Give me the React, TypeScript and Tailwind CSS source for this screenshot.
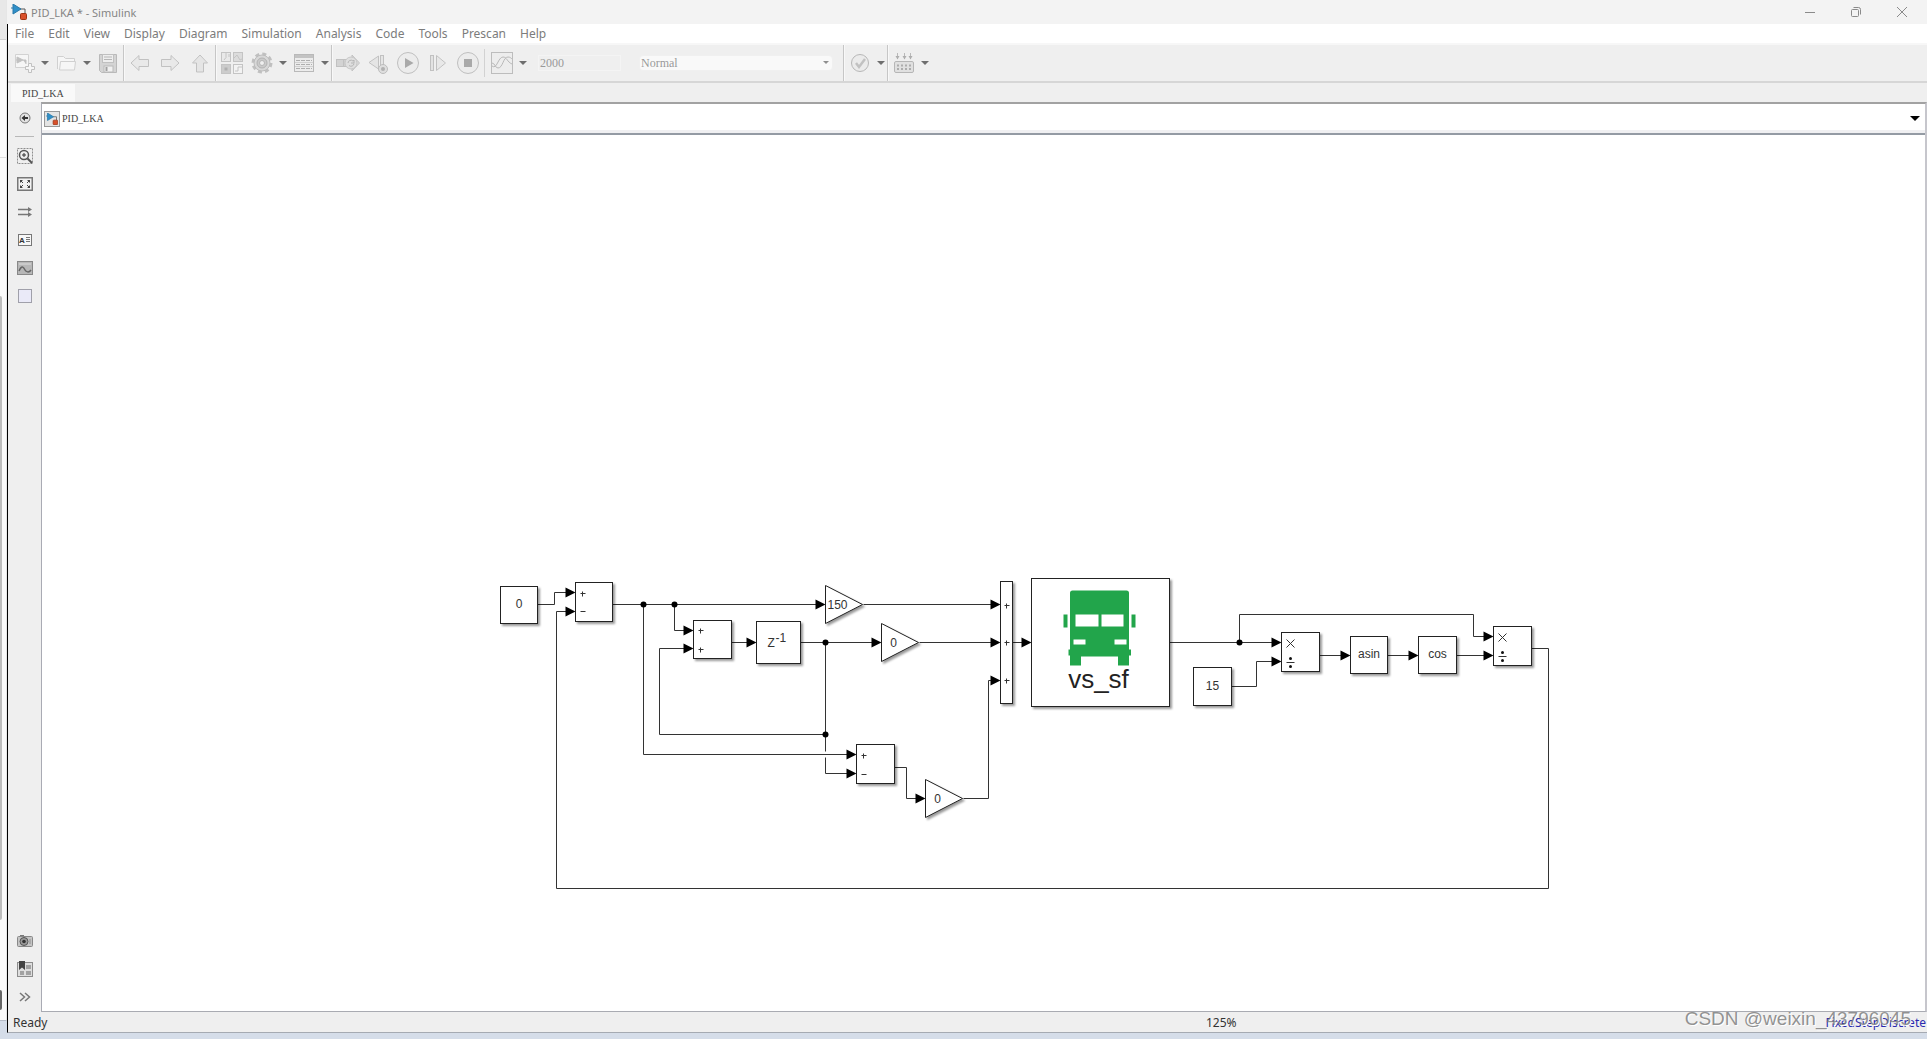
import React from "react";

type IconProps = { children: React.ReactNode; w?: number; h?: number };

function Icon({ children, w = 24, h = 24 }: IconProps) {
  return (
    <svg width={w} height={h} viewBox={`0 0 ${w} ${h}`} fill="none" className="shrink-0" aria-hidden="true">
      {children}
    </svg>
  );
}

function Tool({ label, children }: { label: string; children: React.ReactNode }) {
  return (
    <button type="button" aria-label={label} className="flex w-[30px] items-center justify-center opacity-90">
      {children}
    </button>
  );
}

function Caret({ label }: { label: string }) {
  return (
    <button type="button" aria-label={label} className="flex w-3 items-center justify-center">
      <svg width="8" height="4" viewBox="0 0 8 4" aria-hidden="true">
        <path d="M0 0h8L4 4z" fill="#6e6e6e" />
      </svg>
    </button>
  );
}

function Separator() {
  return <div className="w-0.5 self-stretch border-l border-r border-l-[#c6c6c6] border-r-[#f8f8f8]" />;
}

function ModelMark() {
  return (
    <>
      <path d="M9 5h5v5" stroke="#555" strokeWidth="1" />
      <path d="M0 4h2M2 0l8 5-8 5z" fill="#2f8fc8" stroke="#2b79a8" strokeWidth="1" />
      <rect x="9.5" y="9.5" width="6" height="6" rx="1" fill="#d9502a" stroke="#9c3414" />
    </>
  );
}

function TitleBar() {
  return (
    <header className="flex h-6 shrink-0 items-center bg-[#f3f3f3] pl-1 pr-0.5">
      <Icon w={16} h={16}>
        <ModelMark />
      </Icon>
      <h1 className="ml-1 grow pt-0.5 text-[11px] leading-4 text-[#858585]">PID_LKA * - Simulink</h1>
      <button type="button" aria-label="Minimize" className="flex h-6 w-[46px] items-center justify-center">
        <Icon w={12} h={12}>
          <path d="M1 6.5h10" stroke="#8a8a8a" />
        </Icon>
      </button>
      <button type="button" aria-label="Restore" className="flex h-6 w-[46px] items-center justify-center">
        <Icon w={12} h={12}>
          <rect x="1.5" y="3.5" width="7" height="7" rx="1" stroke="#8a8a8a" />
          <path d="M3.5 1.5h5a2 2 0 0 1 2 2v5" stroke="#8a8a8a" />
        </Icon>
      </button>
      <button type="button" aria-label="Close" className="flex h-6 w-[46px] items-center justify-center">
        <Icon w={12} h={12}>
          <path d="M1 1l10 10M11 1L1 11" stroke="#8a8a8a" />
        </Icon>
      </button>
    </header>
  );
}

const menus = [
  "File", "Edit", "View", "Display", "Diagram", "Simulation",
  "Analysis", "Code", "Tools", "Prescan", "Help",
];

function MenuBar() {
  return (
    <nav className="flex h-[21px] shrink-0 items-center gap-[14px] border-b-2 border-[#f7f7f7] bg-white pl-[7px] pt-px text-[12px] leading-4 text-[#7c7c7c]">
      {menus.map((m) => (
        <button key={m} type="button">{m}</button>
      ))}
    </nav>
  );
}

const g = "#bdbdbd";
const lt = "#f7f7f7";

function Toolbar() {
  return (
    <div className="flex h-[38px] shrink-0 items-stretch border-b-2 border-[#d6d6d6] bg-[#efefef] pl-px">
      <Tool label="New model">
        <Icon>
          <path d="M3.500 3.500h13v13h-13z" fill={lt} stroke="#cfcfcf" />
          <path d="M5 6l6 3-6 3zM4 9h2M11 9h3v4" fill={g} stroke={g} />
          <path d="M16.500 12.500h3v3h3v3h-3v3h-3v-3h-3v-3h3z" fill={lt} stroke={g} />
        </Icon>
      </Tool>
      <Caret label="New options" />
      <Tool label="Open">
        <Icon>
          <path d="M3.500 18V5.500h6l2 2h9V11" fill={lt} stroke="#cdcdcd" />
          <path d="M6.500 10.500h15l-1 8.500H5.500z" fill={lt} stroke="#cdcdcd" />
        </Icon>
      </Tool>
      <Caret label="Open recent" />
      <Tool label="Save">
        <Icon>
          <path d="M3.500 3.500h17v18h-15l-2-2z" fill="#d2d2d2" stroke="#b4b4b4" />
          <rect x="6.500" y="3.500" width="11" height="8" fill="#eee" stroke="#bbb" />
          <path d="M8 6h8M8 8.500h8" stroke="#b0b0b0" />
          <rect x="8" y="15" width="9" height="6" fill="#f2f2f2" stroke="#b4b4b4" />
          <rect x="9.500" y="16" width="2" height="4" fill="#999" />
        </Icon>
      </Tool>
      <Separator />
      <Tool label="Back">
        <Icon>
          <path d="M3 12l8-7.500v4h9.500v7H11v4z" fill="#e9e9e9" stroke={g} />
        </Icon>
      </Tool>
      <Tool label="Forward">
        <Icon>
          <path d="M21 12l-8-7.500v4H3.500v7H13v4z" fill="#e9e9e9" stroke={g} />
        </Icon>
      </Tool>
      <Tool label="Up to parent">
        <Icon>
          <path d="M12 4l7.500 8h-4v9h-7v-9h-4z" fill="#e5e5e5" stroke={g} />
        </Icon>
      </Tool>
      <Separator />
      <Tool label="Library browser">
        <Icon>
          <g stroke="#c0c0c0">
            <rect x="1.500" y="1.500" width="9" height="9" fill="#e9e9e9" />
            <rect x="13.500" y="1.500" width="9" height="9" fill="#dadada" />
            <rect x="1.500" y="13.500" width="9" height="9" fill="#c9c9c9" />
            <rect x="13.500" y="13.500" width="9" height="9" fill="#f4f4f4" />
            <path d="M6 1.500v5L4 9M9 3v3M14 7l3-3 3 5 2-1M15 20h3v-4h4" />
          </g>
          <rect x="4.500" y="16.500" width="3" height="3" fill="#aaa" />
        </Icon>
      </Tool>
      <Tool label="Model configuration">
        <Icon>
          <circle cx="12" cy="12" r="9" stroke="#bcbcbc" strokeWidth="3" strokeDasharray="4 3.070" />
          <circle cx="12" cy="12" r="8" fill="#d6d6d6" stroke="#b6b6b6" />
          <circle cx="12" cy="12" r="5" fill="#c6c6c6" stroke="#adadad" />
          <circle cx="12" cy="12" r="2.500" fill="#efefef" stroke="#b0b0b0" />
        </Icon>
      </Tool>
      <Caret label="Configuration options" />
      <Tool label="Model explorer">
        <Icon>
          <rect x="2.500" y="3.500" width="19" height="17" fill="#ececec" stroke="#b4b4b4" />
          <path d="M3 5.500h18" stroke="#bfbfbf" strokeWidth="3" />
          <path d="M4 9.500h16M4 13.500h16M4 17.500h16" stroke="#a8a8a8" strokeDasharray="4 1" />
          <path d="M3 11.500h18M3 15.500h18" stroke="#cecece" />
        </Icon>
      </Tool>
      <Caret label="Explorer options" />
      <Separator />
      <Tool label="Update diagram">
        <Icon>
          <rect x="0.500" y="8.500" width="7" height="7" fill="#d0d0d0" stroke={g} />
          <path d="M8 8.500h8V4l7.500 8-7.500 8v-4.500H8z" fill="#dcdcdc" stroke={g} />
          <circle cx="15" cy="12" r="6" fill="#dedede" stroke="#c2c2c2" />
          <path d="M12 12a3 3 0 0 1 5-2l1-1v3h-3M18 12.500a3 3 0 0 1-5 2" stroke="#b0b0b0" />
        </Icon>
      </Tool>
      <Tool label="Step back">
        <Icon>
          <path d="M12.500 5v13L3 11.500z" fill="#e5e5e5" stroke={g} />
          <rect x="14.500" y="4.500" width="3" height="13" fill="#e5e5e5" stroke={g} />
          <circle cx="17" cy="18" r="4.500" fill="#ddd" stroke="#b6b6b6" />
          <circle cx="17" cy="18" r="2" fill="#aaa" />
        </Icon>
      </Tool>
      <Tool label="Run">
        <Icon>
          <circle cx="12" cy="12" r="10.500" fill="#ececec" stroke="#bababa" />
          <path d="M9 7l8.500 5L9 17z" fill="#a2a2a2" />
        </Icon>
      </Tool>
      <Tool label="Step forward">
        <Icon>
          <rect x="4.500" y="4.500" width="3" height="15" fill="#e2e2e2" stroke={g} />
          <path d="M10.500 4.500v15l9-7.500z" fill="#e8e8e8" stroke={g} />
        </Icon>
      </Tool>
      <Tool label="Stop">
        <Icon>
          <circle cx="12" cy="12" r="10.500" fill="#ececec" stroke="#bababa" />
          <rect x="8" y="8" width="8" height="8" fill="#a2a2a2" />
        </Icon>
      </Tool>
      <div className="mx-px my-1 w-0.5 border-l border-[#d2d2d2]" />
      <Tool label="Simulation data inspector">
        <Icon>
          <rect x="1.500" y="1.500" width="21" height="21" fill="#ededed" stroke="#b8b8b8" />
          <path d="M2 15c5 4 6-9 11-9 4 0 4 5 9 7M2 12c3 0 3 5 6 5 5 0 5-11 10-11 2 0 3 1 4 2" stroke="#b4b4b4" />
        </Icon>
      </Tool>
      <Caret label="Data inspector options" />
      <input
        aria-label="Stop time"
        defaultValue="2000"
        className="ml-[9px] h-4 w-[83px] self-center border border-[#f4f4f4] bg-[#efefef] px-px font-['Liberation_Serif',serif] text-[12px] leading-[14px] text-[#999] outline-none"
      />
      <div className="relative ml-[18px] flex h-4 w-[194px] self-center">
        <select
          aria-label="Simulation mode"
          defaultValue="Normal"
          className="w-full appearance-none rounded-sm border border-[#f0f0f0] bg-[#f9f9f9] px-px font-['Liberation_Serif',serif] text-[12px] leading-[14px] text-[#999] outline-none"
        >
          <option>Normal</option>
        </select>
        <svg width="6" height="3" viewBox="0 0 6 3" className="pointer-events-none absolute right-1 top-1.5" aria-hidden="true">
          <path d="M0 0h6L3 3z" fill="#8f8f8f" />
        </svg>
      </div>
      <div className="ml-[10px] flex">
        <Separator />
        <Tool label="Model advisor">
          <Icon>
            <circle cx="12" cy="12" r="8.500" fill="#ebebeb" stroke="#b0b0b0" />
            <path d="M8 12l3 4 6-8" stroke="#bdbdbd" strokeWidth="2.500" />
          </Icon>
        </Tool>
        <Caret label="Advisor options" />
        <Separator />
        <Tool label="Build model">
          <Icon>
            <path d="M5.500 2v6M12.500 2v6M18.500 2v6" stroke="#b4b4b4" />
            <path d="M3.500 5h4l-2 3.500zM10.500 5h4l-2 3.500zM16.500 5h4l-2 3.500z" fill="#a8a8a8" />
            <rect x="2.500" y="10.500" width="19" height="11" rx="1.500" fill="#dfdfdf" stroke="#b0b0b0" />
            <path d="M5 14.500h14M5 18h14" stroke="#a5a5a5" strokeWidth="2" strokeDasharray="2 2" />
          </Icon>
        </Tool>
        <Caret label="Build options" />
      </div>
    </div>
  );
}

function SideTool({ label, children }: { label: string; children: React.ReactNode }) {
  return (
    <button type="button" aria-label={label} className="flex h-7 w-full shrink-0 items-center justify-center">
      <Icon w={16} h={16}>{children}</Icon>
    </button>
  );
}

function Sidebar() {
  return (
    <aside className="flex w-[33px] shrink-0 flex-col bg-[#efefef] pb-px pt-0.5">
      <SideTool label="Hide browser">
        <circle cx="8" cy="8" r="5" fill="#e3e3e3" stroke="#777" />
        <path d="M4.500 8l3.500-3v2h3v2H8v2z" fill="#333" />
      </SideTool>
      <div className="mx-[7px] mb-[5px] mt-1 border-t border-[#b8b8b8]" />
      <SideTool label="Zoom">
        <rect x="0.500" y="0.500" width="15" height="15" stroke="#8e8e8e" strokeDasharray="2 1" />
        <circle cx="7" cy="7" r="4.500" fill="#eee" stroke="#555" strokeWidth="1.500" />
        <path d="M7 5v4M5 7h4" stroke="#333" />
        <path d="M10.500 10.500l4.500 4.500" stroke="#555" strokeWidth="2" />
      </SideTool>
      <SideTool label="Fit to view">
        <rect x="0.750" y="1.750" width="14.500" height="12.500" fill="#f2f2f2" stroke="#777" strokeWidth="1.500" />
        <path d="M3 7V4h3zM13 7V4h-3zM3 9v3h3zM13 9v3h-3z" fill="#444" />
        <path d="M3 4l3 3M13 4l-3 3M3 12l3-3M13 12l-3-3" stroke="#444" />
      </SideTool>
      <SideTool label="Sample time">
        <path d="M1 5.500h11M1 10.500h11" stroke="#777" strokeWidth="1.500" />
        <path d="M11 3l4 2.500L11 8zM11 8l4 2.500-4 2.500z" fill="#777" />
      </SideTool>
      <SideTool label="Annotation">
        <rect x="1.500" y="2.500" width="13" height="11" fill="#f7f7f7" stroke="#777" />
        <text x="2" y="11" fontSize="8" fontWeight="bold" fill="#333" className="font-['Liberation_Sans',sans-serif]">A</text>
        <path d="M9 5.500h4M9 7.500h4M9 9.500h4" stroke="#777" />
      </SideTool>
      <SideTool label="Image">
        <rect x="0.500" y="1.500" width="15" height="13" fill="#b7b7b7" stroke="#888" />
        <path d="M2 4h12" stroke="#ddd" />
        <path d="M2 11c3-7 5-3 6-1s4 3 6 0" stroke="#666" strokeWidth="1.500" />
      </SideTool>
      <SideTool label="Area">
        <rect x="1.500" y="1.500" width="13" height="13" fill="#eaeaf8" stroke="#a0a0aa" />
      </SideTool>
      <div className="grow" />
      <SideTool label="Screenshot">
        <path d="M3 2h4v2H3z" fill="#777" />
        <rect x="0.500" y="3.500" width="15" height="10" rx="1" fill="#c4c4c4" stroke="#888" />
        <circle cx="7" cy="8.500" r="4" fill="#999" stroke="#555" />
        <circle cx="7" cy="8.500" r="1.800" fill="#333" />
        <path d="M12 6h2v5h-2z" fill="#aaa" />
      </SideTool>
      <SideTool label="Viewmarks">
        <rect x="0.500" y="1.500" width="15" height="14" fill="#dedede" stroke="#8c8c8c" />
        <path d="M9 4h5v4H9zM9 10h5v4H9zM3 10h4v4H3z" fill="#a2a2a2" />
        <path d="M2 0h6v9L5 6.500 2 9z" fill="#444" />
      </SideTool>
      <SideTool label="More">
        <path d="M3 4l4.500 4L3 12M8 4l4.500 4L8 12" stroke="#777" strokeWidth="1.500" />
      </SideTool>
    </aside>
  );
}

type Block = { x: number; y: number; w: number; h: number; text?: string };

const blocks: Block[] = [
  { x: 458, y: 451, w: 37, h: 37, text: "0" },
  { x: 533, y: 447, w: 37, h: 39 },
  { x: 651, y: 485, w: 38, h: 38 },
  { x: 714, y: 486, w: 44, h: 42 },
  { x: 814, y: 609, w: 38, h: 39 },
  { x: 958, y: 446, w: 12, h: 122 },
  { x: 989, y: 443, w: 138, h: 128 },
  { x: 1151, y: 532, w: 38, h: 38, text: "15" },
  { x: 1239, y: 497, w: 38, h: 39 },
  { x: 1308, y: 501, w: 37, h: 37, text: "asin" },
  { x: 1376, y: 501, w: 38, h: 37, text: "cos" },
  { x: 1451, y: 491, w: 38, h: 39 },
];

const gains = [
  { x: 783, y: 469, text: "150" },
  { x: 839, y: 507, text: "0" },
  { x: 883, y: 663, text: "0" },
];

const wires = [
  "M495 469H512V457H525",
  "M1489 513H1506V753H514V476H525",
  "M570 469H775",
  "M632 469V495H643",
  "M601 469V619H806",
  "M689 507H706",
  "M783 599H617V513H643",
  "M758 507H831",
  "M783 507V616M783 622V638H806",
  "M821 469H950",
  "M877 507H950",
  "M852 632H864V663H875",
  "M921 663H946V545H950",
  "M970 507H981",
  "M1127 507H1231",
  "M1197 507V479H1431V501H1443",
  "M1189 551H1214V526H1231",
  "M1277 520H1300",
  "M1345 520H1368",
  "M1414 520H1443",
];

const arrowTips = [
  [533, 457], [533, 476], [783, 469], [651, 495], [651, 513], [714, 507],
  [839, 507], [814, 619], [814, 638], [883, 663], [958, 469], [958, 507],
  [958, 545], [989, 507], [1239, 507], [1239, 526], [1308, 520], [1376, 520],
  [1451, 501], [1451, 520],
];

const dots = [[601, 469], [632, 469], [783, 507], [783, 599], [1197, 507]];

const plusSigns = [[540, 458], [658, 495], [658, 514], [821, 620], [964, 470], [964, 507], [964, 545]];
const minusSigns = [[540, 476], [821, 639]];
const products = [[1248, 508], [1460, 502]];

function Diagram() {
  return (
    <svg className="block h-full w-full font-['Liberation_Sans',Arial,sans-serif]" role="img" aria-label="PID_LKA block diagram">
      <defs>
        <filter id="shade" x="-20%" y="-20%" width="150%" height="150%">
          <feDropShadow dx="2" dy="2" stdDeviation="1" floodColor="#000" floodOpacity="0.400" />
        </filter>
      </defs>
      <g transform="translate(0.500 0.500)">
        {wires.map((d) => (
          <path key={d} d={d} fill="none" stroke="#333" />
        ))}
        {arrowTips.map(([x, y]) => (
          <path key={`${x}-${y}`} d={`M${x} ${y}l-10 -5v10z`} fill="#000" />
        ))}
        {dots.map(([x, y]) => (
          <circle key={`${x}-${y}`} cx={x} cy={y} r="3" fill="#000" />
        ))}
        {blocks.map((b) => (
          <g key={b.x}>
            <rect x={b.x} y={b.y} width={b.w} height={b.h} fill="#fff" stroke="#222" filter="url(#shade)" />
            {b.text && (
              <text x={b.x + b.w / 2} y={b.y + b.h / 2 + 3} textAnchor="middle" fontSize="12" fill="#333">{b.text}</text>
            )}
          </g>
        ))}
        {gains.map((n) => (
          <g key={n.x}>
            <path d={`M${n.x} ${n.y - 19}l37 19l-37 19z`} fill="#fff" stroke="#222" filter="url(#shade)" />
            <text x={n.x + 12} y={n.y + 4} textAnchor="middle" fontSize="12" fill="#333">{n.text}</text>
          </g>
        ))}
        <text x="725" y="511" fontSize="12" fill="#333">Z</text>
        <text x="733" y="506" fontSize="12" fill="#333">-1</text>
        <g stroke="#333">
          {plusSigns.map(([x, y]) => (
            <path key={`${x}-${y}`} d={`M${x - 2} ${y}h5M${x} ${y - 2}v5`} />
          ))}
          {minusSigns.map(([x, y]) => (
            <path key={`${x}-${y}`} d={`M${x - 2} ${y}h5`} />
          ))}
          {products.map(([x, y]) => (
            <g key={x}>
              <path d={`M${x - 4} ${y - 4}l8 8M${x + 4} ${y - 4}l-8 8M${x - 4} ${y + 19}h8`} />
              <circle cx={x} cy={y + 15} r="1.500" fill="#111" stroke="none" />
              <circle cx={x} cy={y + 23} r="1.500" fill="#111" stroke="none" />
            </g>
          ))}
        </g>
        <g fill="#22a54b">
          <path d="M1030 455h54q2.500 0 2.500 2.500V514h2v6h-2v10h-11v-9h-37v9h-11v-10h-1.500v-6h1.500v-56.500q0-2.500 2.500-2.500z" />
          <rect x="1021" y="479" width="4" height="13" />
          <rect x="1089" y="479" width="4" height="13" />
        </g>
        <path d="M1033 479h23v12h-23zM1059 479h22v12h-22zM1031 504h12v5h-12zM1072 504h12v5h-12z" fill="#fff" />
        <text x="1056" y="552" textAnchor="middle" fontSize="26" fill="#222">vs_sf</text>
      </g>
    </svg>
  );
}

function AddressBar() {
  return (
    <div className="flex h-[31px] shrink-0 items-center border-b-2 border-[#949ba4] bg-white pl-0.5 shadow-[inset_0_-3px_0_#f0f0f2]">
      <div className="flex size-4 items-center justify-center border border-[#999] bg-[#e4e4e4]">
        <svg width="12" height="12" viewBox="0 0 16 16" fill="none" aria-hidden="true">
          <ModelMark />
        </svg>
      </div>
      <a href="#PID_LKA" className="ml-0.5 font-['Liberation_Serif',serif] text-[10px] leading-4 text-[#444]">PID_LKA</a>
      <button type="button" aria-label="Navigation history" className="ml-auto mr-0.5 flex size-4 items-center justify-center">
        <svg width="10" height="5" viewBox="0 0 10 5" aria-hidden="true">
          <path d="M0 0h10L5 5z" fill="#000" />
        </svg>
      </button>
    </div>
  );
}

export default function App() {
  return (
    <div className="flex h-screen flex-col overflow-hidden bg-[#d5dde9] font-['Noto_Sans','Open_Sans',sans-serif]">
      <div className="flex min-h-0 grow">
        <div className="mb-3 flex w-[7px] shrink-0 flex-col border-r border-b border-[#b5bcc8] border-r-[#e6e6e6] bg-[#fafafa]">
          <div className="h-10 border-b border-[#d0d0d0] bg-[#e8e8e8]" />
          <div className="h-[118px] border-b border-[#ddd]" />
          <div className="mt-[138px] w-0.5 grow rounded-r bg-[#bdbdbd]" />
          <div className="mb-[10px] mt-[70px] h-5 w-0.5 rounded-r bg-[#666]" />
        </div>
        <div className="flex min-w-0 grow flex-col">
          <TitleBar />
          <div className="flex min-h-0 grow flex-col border-b border-l border-b-[#a5aab2] border-l-black">
            <MenuBar />
            <Toolbar />
            <div className="flex h-[19px] shrink-0 items-end bg-[#efefef] pl-[3px]">
              <button type="button" className="h-[18px] bg-[#f9f9f9] px-[11px] pt-0.5 font-['Liberation_Serif',serif] text-[10px] leading-4 text-[#444]">
                PID_LKA
              </button>
            </div>
            <div className="flex min-h-0 grow">
              <Sidebar />
              <main className="flex min-w-0 grow flex-col border-2 border-b border-l border-b-[#a9abb2] border-l-[#a9abb4] border-r-[#c6c6cc] border-t-[#a2a2a2] bg-white">
                <AddressBar />
                <div className="min-h-0 grow">
                  <Diagram />
                </div>
              </main>
            </div>
            <footer className="relative flex h-5 shrink-0 items-center justify-between bg-[#efefef] px-[5px] pt-0.5 text-[12px] leading-4 text-[#333]">
              <span className="w-0 grow">Ready</span>
              <span className="w-8">125%</span>
              <span className="-mr-1 w-[688px] text-right text-[#2a2ab0]">FixedStepDiscrete</span>
              <span className="absolute right-4 top-[-5px] whitespace-nowrap font-['Liberation_Sans',Arial,sans-serif] text-[19px] leading-6 text-[#777]/80 [text-shadow:1px_1px_0_#fff]">
                CSDN @weixin_43796045
              </span>
            </footer>
          </div>
        </div>
      </div>
      <div className="h-1.5 shrink-0 bg-[#d5dde9]" />
    </div>
  );
}
